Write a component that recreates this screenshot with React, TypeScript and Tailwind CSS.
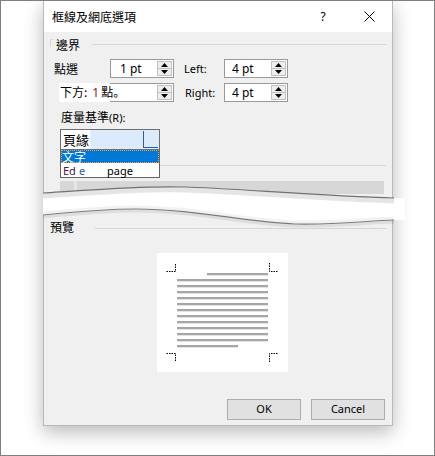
import type { ReactNode } from "react";

const cjk = { fontFamily: '"Noto Sans CJK TC", "Noto Sans", sans-serif' };
const cjkSc = { fontFamily: '"Noto Sans CJK SC", "Noto Sans", sans-serif' };
const latin = { fontFamily: '"Noto Sans", "Noto Sans CJK TC", sans-serif' };

const Arrow = ({ down }: { down?: boolean }) => (
  <svg width="7" height="4" viewBox="0 0 7 4">
    <path d={down ? "M0 0 H7 L3.5 4 Z" : "M0 4 H7 L3.5 0 Z"} fill="#000" />
  </svg>
);

// numeric box with the little up / down buttons
const Spin = ({ value, pad, noLeft }: { value?: string; pad: string; noLeft?: boolean }) => (
  <div
    className={`flex h-[19px] w-[64px] items-center border border-[#9a9a9a] bg-white pr-[1px] ${
      noLeft ? "border-l-0" : ""
    }`}
  >
    <span className={`flex-1 text-[12px] leading-none text-black ${pad}`} style={latin}>
      {value}
    </span>
    <div className="flex h-[15px] w-[15px] flex-col border border-[#c2c2c2] bg-[#eeeeee]">
      <div className="flex flex-1 items-center justify-center border-b border-[#c2c2c2]">
        <Arrow />
      </div>
      <div className="flex flex-1 items-center justify-center">
        <Arrow down />
      </div>
    </div>
  </div>
);

const Label = ({ children, className }: { children: ReactNode; className?: string }) => (
  <span className={`text-[11px] leading-none text-black ${className ?? ""}`} style={latin}>
    {children}
  </span>
);

const Preview = () => {
  const rows = Array.from({ length: 11 }, (_, i) => 26 + i * 6);
  return (
    <svg width="131" height="119" viewBox="0 0 131 119" className="block">
      <rect width="131" height="119" fill="#fff" />
      <g stroke="#000" strokeWidth="1" strokeDasharray="1.5 1" fill="none">
        <path d="M9.5 18.5 H18.5 V10" />
        <path d="M112.5 10 V18.5 H121.5" />
        <path d="M9.5 100.5 H18.5 V109" />
        <path d="M112.5 109 V100.5 H121.5" />
      </g>
      <g fill="#a6a6a6">
        <rect x="50" y="20" width="61" height="2.3" />
        {rows.map((y) => (
          <rect key={y} x="20" y={y} width="91" height="2.3" />
        ))}
        <rect x="20" y="92" width="61" height="2.3" />
      </g>
    </svg>
  );
};

// torn-paper cut across the dialog
const Tear = () => {
  const top = "M-2 21 C60 17 100 14 140 15 S280 24 349 26";
  const bottom = "M-2 43 C40 39 70 37 90 37 C150 37 200 50 250 52 C290 53 320 49 349 48";
  const fill =
    "M-2 21 C60 17 100 14 140 15 S280 24 348 26 L362 26.5 L362 47.5 L348 48 C320 49 290 53 250 52 C200 50 150 37 90 37 C70 37 40 39 -2 43 Z";
  return (
    <svg
      className="pointer-events-none absolute left-[-1px] top-[140px]"
      width="362"
      height="70"
      viewBox="-2 0 362 70"
    >
      <defs>
        <clipPath id="gap">
          <path d={fill} />
        </clipPath>
      </defs>
      <path d={fill} fill="#fff" />
      <g clipPath="url(#gap)">
        <path d={top} transform="translate(0 3)" stroke="#000" strokeOpacity="0.1" strokeWidth="5" fill="none" />
        <path d={bottom} transform="translate(0 -2)" stroke="#000" strokeOpacity="0.05" strokeWidth="3" fill="none" />
      </g>
      <path d={bottom} transform="translate(0 2)" stroke="#000" strokeOpacity="0.08" strokeWidth="3" fill="none" />
      <path d={top} stroke="#707070" strokeWidth="1.2" fill="none" />
      <path d={bottom} stroke="#7a7a7a" strokeWidth="1.2" fill="none" />
    </svg>
  );
};

export default function App() {
  return (
    <div className="h-[456px] w-[435px] overflow-hidden border border-[#808080] bg-white pl-[42px]">
      <div className="flex h-[425px] w-[350px] flex-col border-x border-b border-[#b9b9b9] shadow-[0_6px_18px_rgba(0,0,0,0.28)]">
        {/* title bar */}
        <div className="flex h-[31px] shrink-0 items-center bg-white pl-[8px]">
          <span className="flex-1 text-[12px] text-black" style={cjk}>
            框線及網底選項
          </span>
          <span className="flex w-[46px] justify-center text-[12px] text-black" style={latin}>
            ?
          </span>
          <span className="flex w-[46px] justify-center">
            <svg width="11" height="11" viewBox="0 0 11 11">
              <path d="M0.5 0.5 L10.5 10.5 M10.5 0.5 L0.5 10.5" stroke="#000" strokeWidth="1" />
            </svg>
          </span>
        </div>

        <div className="relative flex flex-1 flex-col bg-[#f0f0f0]">
          {/* 邊界 */}
          <div className="mt-[6px] flex h-[13px] items-center pl-[6px] pr-[6px]">
            <span className="mt-[1px] h-[8px] w-[3px] self-start border-l border-t border-[#d8d8d8]" />
            <span className="ml-[3px] text-[12px] leading-none text-black" style={cjk}>
              邊界
            </span>
            <span className="ml-[12px] h-px flex-1 bg-[#d5d5d5]" />
          </div>

          <div className="mt-[8px] flex h-[19px] items-center pl-[10px]">
            <span className="w-[56px] text-[12px] leading-none text-black" style={cjk}>
              點選
            </span>
            <Spin value="1 pt" pad="pl-[9px]" />
            <Label className="ml-[10px] w-[40px]">Left:</Label>
            <Spin value="4 pt" pad="pl-[7px]" />
          </div>

          <div className="mt-[5px] flex h-[19px] items-center pl-[15px]">
            <div className="flex h-[19px] w-[51px] items-center bg-white pl-[1px]">
              <span className="relative z-10 whitespace-nowrap text-[12px] leading-none text-black" style={cjk}>
                下方:
                <span className="ml-[5px] text-[#8b1a1a]" style={latin}>
                  1
                </span>
                <span className="ml-[2px]">點</span>
                <span style={cjkSc}>。</span>
              </span>
            </div>
            <Spin pad="pl-[7px]" noLeft />
            <Label className="ml-[11px] w-[39px]">Right:</Label>
            <Spin value="4 pt" pad="pl-[7px]" />
          </div>

          {/* 度量基準 */}
          <div className="mt-[7px] flex h-[16px] items-center pl-[17px]">
            <span className="text-[12px] leading-none text-black" style={cjk}>
              度量基準
            </span>
            <Label className="text-[#1c1c6a]">(R):</Label>
          </div>

          <div className="mt-[4px] flex pl-[16px]">
            <div className="flex w-[100px] flex-col">
              <div className="flex h-[21px] border border-[#6e6e6e] bg-[#dcebfb]">
                <span className="flex flex-1 items-center pl-[2px] text-[13px] leading-none text-black [background:linear-gradient(90deg,#fff_0,#fff_28px,#dcebfb_30px)]" style={cjk}>
                  頁緣
                </span>
                <span className="mb-[1px] mr-[1px] mt-[1px] w-[15px] border-b border-l border-[#2d5e98] bg-[#dcebfb]" />
              </div>
              <div className="flex flex-col border-x border-b border-[#646464] bg-white">
                <div className="flex h-[13px] items-center bg-[#0078d7] pl-[1px] outline-1 -outline-offset-1 outline-dotted outline-[#f3a33a]">
                  <span className="text-[12px] leading-none text-white" style={cjk}>
                    文字
                  </span>
                </div>
                <div className="flex h-[14px] items-center pl-[2px] text-[11px] leading-none" style={latin}>
                  <span className="text-[#4a1640]">Ed</span>
                  <span className="ml-[3px] text-[#1f5fae]">e</span>
                  <span className="ml-[22px] text-black">page</span>
                </div>
              </div>
            </div>
            <span className="mr-[6px] mt-[36px] h-px flex-1 bg-[#d8d8d8]" />
          </div>

          <div className="mt-[3px] ml-[16px] flex h-[13px] w-[324px]">
            <span className="w-[14px] bg-[#d7d7d7]" />
            <span className="w-[3px] bg-[#e6e6e6]" />
            <span className="flex-1 bg-[#d7d7d7]" />
          </div>

          {/* 預覽 */}
          <div className="mt-[25px] flex h-[16px] items-center pl-[6px] pr-[6px]">
            <span className="text-[12px] leading-none text-black" style={cjk}>
              預覽
            </span>
            <span className="ml-[21px] mt-[2px] h-px flex-1 bg-[#d5d5d5]" />
          </div>

          <div className="ml-[113px] mt-[18px]">
            <Preview />
          </div>

          <div className="mt-[27px] flex gap-[10px] pl-[183px]">
            <button className="flex h-[21px] w-[74px] items-center justify-center border border-[#adadad] bg-[#e1e1e1] text-[11px] text-black" style={latin}>
              OK
            </button>
            <button className="flex h-[21px] w-[74px] items-center justify-center border border-[#adadad] bg-[#e1e1e1] text-[11px] text-black" style={latin}>
              Cancel
            </button>
          </div>

          <Tear />
        </div>
      </div>
    </div>
  );
}
